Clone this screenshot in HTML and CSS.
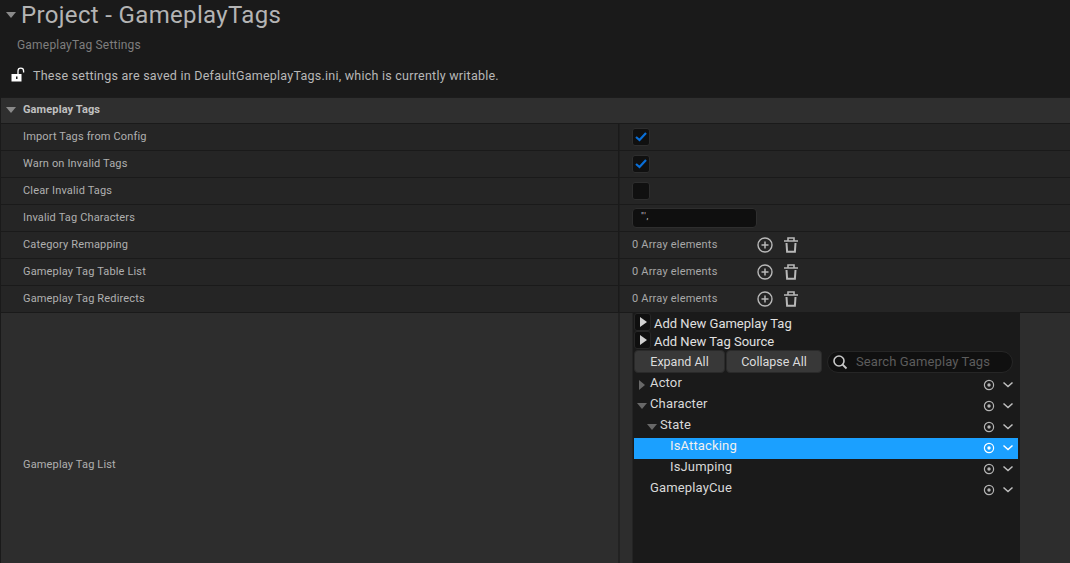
FILE: index.html
```html
<!DOCTYPE html>
<html lang="en">
<head>
<meta charset="utf-8">
<title>Project - GameplayTags</title>
<link rel="stylesheet" href="styles.css">
</head>
<body>
<svg class="defs" width="0" height="0" aria-hidden="true">
  <symbol id="plus" viewBox="0 0 16 16"><circle cx="8" cy="8" r="7" fill="none" stroke="currentColor" stroke-width="1.400"/><path d="M8 4.500v7M4.500 8h7" stroke="currentColor" stroke-width="1.500"/></symbol>
  <symbol id="trash" viewBox="0 0 16 16"><path d="M1 4h14M5 3.500V1h6v2.500" fill="none" stroke="currentColor" stroke-width="1.600"/><path d="M3.500 6l.6 8.800h7.800l.6-8.800" fill="none" stroke="currentColor" stroke-width="2"/></symbol>
  <symbol id="dot" viewBox="0 0 12 12"><circle cx="6" cy="6" r="4.600" fill="none" stroke="currentColor" stroke-width="1.200"/><circle cx="6" cy="6" r="1.700" fill="currentColor"/></symbol>
  <symbol id="chev" viewBox="0 0 12 12"><path d="M1.500 3.500 6 7.500l4.500-4" fill="none" stroke="currentColor" stroke-width="1.500"/></symbol>
</svg>
<header class="top">
  <div class="title-row"><span class="tri tri-title"></span><h1>Project - GameplayTags</h1></div>
  <div class="subtitle">GameplayTag Settings</div>
  <div class="notice">
    <svg class="lock" width="14" height="16" viewBox="0 0 14 16"><path d="M7 7V4a2.800 2.800 0 0 1 5.600 0v1.500" fill="none" stroke="#fff" stroke-width="1.300"/><rect x="0.500" y="7" width="10" height="7.500" fill="#fff"/><rect x="5" y="9.500" width="1.500" height="2.500" fill="#222"/></svg>
    <span>These settings are saved in DefaultGameplayTags.ini, which is currently writable.</span>
  </div>
</header>
<main class="panel">
  <div class="section"><span class="tri tri-section"></span>Gameplay Tags</div>
  <div class="row"><div class="name">Import Tags from Config</div><div class="value"><span class="check"><svg width="12" height="10" viewBox="0 0 12 10"><path d="M1 5l3.500 3L11 1" fill="none" stroke="#0a6fd8" stroke-width="2.200"/></svg></span></div></div>
  <div class="row"><div class="name">Warn on Invalid Tags</div><div class="value"><span class="check"><svg width="12" height="10" viewBox="0 0 12 10"><path d="M1 5l3.500 3L11 1" fill="none" stroke="#0a6fd8" stroke-width="2.200"/></svg></span></div></div>
  <div class="row"><div class="name">Clear Invalid Tags</div><div class="value"><span class="check"></span></div></div>
  <div class="row"><div class="name">Invalid Tag Characters</div><div class="value"><span class="input">"',</span></div></div>
  <div class="row"><div class="name">Category Remapping</div><div class="value"><span class="count">0 Array elements</span><svg class="act"><use href="#plus"/></svg><svg class="act trash"><use href="#trash"/></svg></div></div>
  <div class="row"><div class="name">Gameplay Tag Table List</div><div class="value"><span class="count">0 Array elements</span><svg class="act"><use href="#plus"/></svg><svg class="act trash"><use href="#trash"/></svg></div></div>
  <div class="row"><div class="name">Gameplay Tag Redirects</div><div class="value"><span class="count">0 Array elements</span><svg class="act"><use href="#plus"/></svg><svg class="act trash"><use href="#trash"/></svg></div></div>
  <div class="row row-tags">
    <div class="name">Gameplay Tag List</div>
    <div class="value value-tags">
      <div class="tags">
        <div class="add"><span class="play"></span><span class="add-text">Add New Gameplay Tag</span></div>
        <div class="add"><span class="play"></span><span class="add-text">Add New Tag Source</span></div>
        <div class="tools">
          <span class="btn btn-expand">Expand All</span>
          <span class="btn btn-collapse">Collapse All</span>
          <span class="search"><svg width="16" height="16" viewBox="0 0 16 16"><circle cx="7" cy="7" r="5" fill="none" stroke="#c8c8c8" stroke-width="1.600"/><path d="m10.500 10.500 4 4" stroke="#c8c8c8" stroke-width="1.800"/></svg>Search Gameplay Tags</span>
        </div>
        <div class="tree">
          <div class="node"><span class="node-label l0"><span class="tw tw-right"></span>Actor</span><svg class="mini dot"><use href="#dot"/></svg><svg class="mini chev"><use href="#chev"/></svg></div>
          <div class="node"><span class="node-label l0"><span class="tw tw-down"></span>Character</span><svg class="mini dot"><use href="#dot"/></svg><svg class="mini chev"><use href="#chev"/></svg></div>
          <div class="node"><span class="node-label l1"><span class="tw tw-down"></span>State</span><svg class="mini dot"><use href="#dot"/></svg><svg class="mini chev"><use href="#chev"/></svg></div>
          <div class="node selected"><span class="node-label l2">IsAttacking</span><svg class="mini dot"><use href="#dot"/></svg><svg class="mini chev"><use href="#chev"/></svg></div>
          <div class="node"><span class="node-label l2">IsJumping</span><svg class="mini dot"><use href="#dot"/></svg><svg class="mini chev"><use href="#chev"/></svg></div>
          <div class="node"><span class="node-label l0">GameplayCue</span><svg class="mini dot"><use href="#dot"/></svg><svg class="mini chev"><use href="#chev"/></svg></div>
        </div>
      </div>
    </div>
  </div>
</main>
</body>
</html>
```

FILE: styles.css
```css
* { box-sizing: border-box; }
html, body { margin: 0; height: 563px; overflow: hidden; }
body {
  width: 1070px;
  background: #1a1a1a; color: #c0c0c0;
  font-family: Roboto, "Liberation Sans", sans-serif;
  font-size: 11px;
}
.defs { position: absolute; }
.top { height: 97px; padding-left: 6px; }
.title-row { display: flex; align-items: center; height: 30px; }
h1 { margin: 0; font-size: 24px; font-weight: 400; color: #b4b4b4; letter-spacing: 0.34px; }
.tri { display: block; width: 0; height: 0; border-style: solid; border-color: #8a8a8a transparent transparent; }
.tri-title { border-width: 6px 5px 0; margin-right: 5px; }
.subtitle { margin: 7px 0 0 11px; height: 16px; line-height: 16px; font-size: 12px; color: #7e7e7e; letter-spacing: 0.2px; }
.notice { display: flex; align-items: center; height: 18px; margin-top: 13px; padding-left: 5px; font-size: 12.5px; color: #b8b8b8; letter-spacing: 0.24px; }
.lock { margin-right: 8px; }
.panel { height: 466px; margin-left: 1px; overflow: hidden; background: #2a2a2a; }
.section { display: flex; align-items: center; height: 27px; padding: 0 0 2px 5px; background: #2f2f2f; border-top: 1px solid #1c1c1c; border-bottom: 1px solid #1a1a1a; font-weight: 700; color: #c0c0c0; letter-spacing: 0.12px; }
.tri-section { border-width: 6px 5px 0; margin-right: 7px; }
.row { display: flex; height: 27px; background: #252525; border-bottom: 1px solid #1a1a1a; }
.name { width: 618px; padding-left: 22px; line-height: 26px; color: #b0b0b0; letter-spacing: 0.16px; border-right: 1px solid #1a1a1a; flex: none; }
.value { display: flex; align-items: center; flex: 1; padding-left: 12px; border-left: 1px solid #1f1f1f; }
.check { display: flex; align-items: center; justify-content: center; width: 18px; height: 18px; background: #101010; border: 1px solid #2e2e2e; border-radius: 3px; }
.input { display: block; width: 125px; height: 20px; background: #0f0f0f; border: 1px solid #2e2e2e; border-radius: 4px; padding-left: 8px; font-size: 9px; line-height: 14px; letter-spacing: 0.8px; color: #c0c0c0; }
.count { width: 125px; padding-bottom: 2px; color: #a8a8a8; letter-spacing: 0.2px; }
.act { width: 16px; height: 16px; margin-bottom: 1px; color: #b8b8b8; }
.trash { margin-left: 10px; }
.row-tags { height: 303px; background: #2d2d2d; border-bottom: 0; }
.row-tags .name { display: flex; align-items: center; border-right-color: #222; }
.value-tags { align-items: flex-start; background: #2d2d2d; border-left-color: #222; }
.tags { width: 388px; height: 303px; padding-left: 1px; background: #1a1a1a; border-left: 1px solid #242424; }
.add { display: flex; align-items: center; height: 18px; font-size: 13px; color: #e0e0e0; }
.add-text { margin-top: 2px; }
.play { position: relative; display: block; width: 17px; height: 18px; margin-right: 3px; background: #0f0f0f; border: 1px solid #262626; border-radius: 3px; }
.play::after { content: ""; position: absolute; left: 5px; top: 3px; border-style: solid; border-width: 5.5px 0 5.5px 7px; border-color: transparent transparent transparent #d0d0d0; }
.tools { display: flex; align-items: center; height: 24px; padding-top: 1px; }
.btn { display: flex; align-items: center; justify-content: center; height: 23px; background: #383838; border: 1px solid #2a2a2a; border-radius: 4px; font-size: 12.5px; color: #dcdcdc; }
.btn-expand { width: 91px; }
.btn-collapse { width: 96px; margin-left: 1px; }
.search { display: flex; align-items: center; width: 186px; height: 22px; margin-left: 5px; padding-left: 4px; gap: 8px; background: #101010; border: 1px solid #262626; border-radius: 11px; color: #5c5c5c; font-size: 13px; letter-spacing: 0.1px; }
.tree { margin-top: 2px; width: 384px; }
.node { display: flex; align-items: flex-start; height: 21px; padding-right: 4px; color: #d8d8d8; font-size: 13px; line-height: 15px; letter-spacing: 0.15px; }
.node-label { flex: 1; display: block; position: relative; }
.l0 { padding-left: 16px; }
.l1 { padding-left: 26px; }
.l2 { padding-left: 36px; }
.tw { position: absolute; display: block; width: 0; height: 0; border-style: solid; }
.tw-right { left: 5px; top: 5px; border-width: 5px 0 5px 6px; border-color: transparent transparent transparent #686868; }
.tw-down { left: 3px; top: 7px; border-width: 6px 5px 0; border-color: #686868 transparent transparent; }
.l1 .tw-down { left: 13px; }
.mini { width: 12px; height: 12px; margin-top: 4px; color: #b4b4b4; }
.dot { margin-right: 7px; }
.chev { margin-top: 4px; color: #c0c0c0; }
.selected { background: #1ba0ff; color: #f0f0f0; }
.selected .mini { color: #fff; }
```
